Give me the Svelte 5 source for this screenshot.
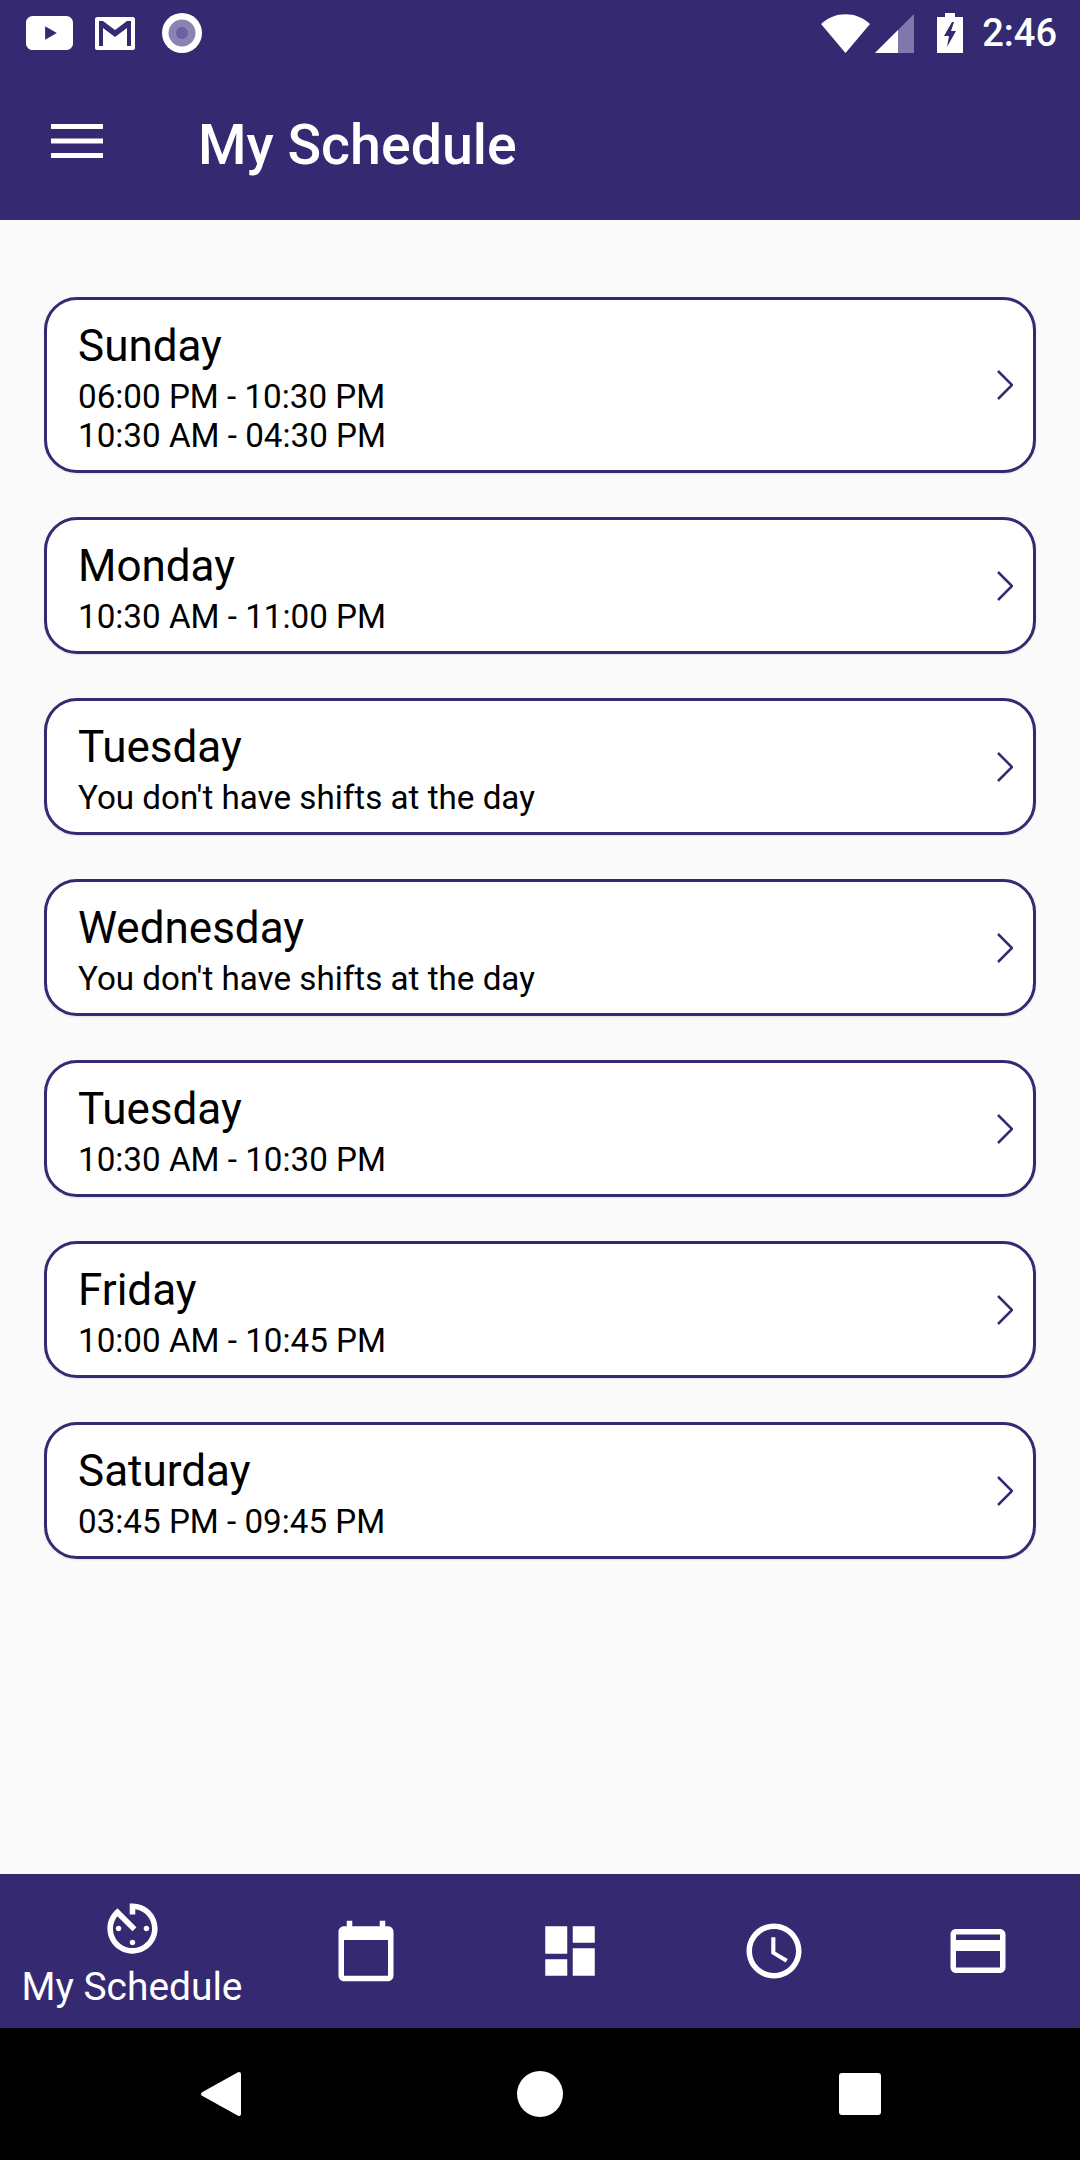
<script>
	const days = [
		{ name: "Sunday", lines: ["06:00 PM - 10:30 PM", "10:30 AM - 04:30 PM"] },
		{ name: "Monday", lines: ["10:30 AM - 11:00 PM"] },
		{ name: "Tuesday", lines: ["You don't have shifts at the day"] },
		{ name: "Wednesday", lines: ["You don't have shifts at the day"] },
		{ name: "Tuesday", lines: ["10:30 AM - 10:30 PM"] },
		{ name: "Friday", lines: ["10:00 AM - 10:45 PM"] },
		{ name: "Saturday", lines: ["03:45 PM - 09:45 PM"] }
	];

	const tabs = [
		"M20 3h-1V1h-2v2H7V1H5v2H4c-1.1 0-2 .9-2 2v16c0 1.1.9 2 2 2h16c1.1 0 2-.9 2-2V5c0-1.1-.9-2-2-2zm0 18H4V8h16v13z",
		"M3 13h8V3H3v10zm0 8h8v-6H3v6zm10 0h8V11h-8v10zm0-18v6h8V3h-8z",
		"M11.99 2C6.47 2 2 6.48 2 12s4.47 10 9.99 10C17.52 22 22 17.52 22 12S17.52 2 11.99 2zM12 20c-4.42 0-8-3.58-8-8s3.58-8 8-8 8 3.58 8 8-3.58 8-8 8zm.5-13H11v6l5.25 3.15.75-1.23-4.5-2.67z",
		"M20 4H4c-1.11 0-1.99.89-1.99 2L2 18c0 1.11.89 2 2 2h16c1.11 0 2-.89 2-2V6c0-1.11-.89-2-2-2zm0 14H4v-6h16v6zm0-10H4V6h16v2z"
	];
</script>

<div class="screen">
	<div class="status">
		<svg class="yt" width="47" height="34" viewBox="0 0 48 35" preserveAspectRatio="none">
			<path
				fill-rule="evenodd"
				d="M7 0h34c4 0 7 3 7 7v21c0 4-3 7-7 7H7c-4 0-7-3-7-7V7c0-4 3-7 7-7zM19.500 10.500v14l12-7z"
				fill="#fff"
			/>
		</svg>
		<svg class="gm" width="40" height="33" viewBox="0 0 40 33">
			<path
				fill-rule="evenodd"
				d="M2 0h36c1 0 2 1 2 2v29c0 1-1 2-2 2H2c-1 0-2-1-2-2V2c0-1 1-2 2-2zM4 4v25h4V11l12 9 12-9v18h4V4h-4L20 13 8 4z"
				fill="#fff"
			/>
		</svg>
		<svg class="dot" width="40" height="40" viewBox="0 0 40 40">
			<circle cx="20" cy="20" r="20" fill="#fff" />
			<circle cx="20" cy="20" r="13.500" fill="#8a83b4" />
			<circle cx="20" cy="20" r="6" fill="#6a62a0" />
		</svg>
		<span class="spacer"></span>
		<svg class="wifi" width="49" height="39" viewBox="0 0 49 39">
			<path d="M24.500 39L0 10C14 -3 35 -3 49 10z" fill="#fff" />
		</svg>
		<svg class="signal" width="39" height="39" viewBox="0 0 39 39">
			<path d="M0 39L39 0v39z" fill="#7f78ab" />
			<path d="M0 39l23-23v23z" fill="#fff" />
		</svg>
		<svg class="battery" width="26" height="40" viewBox="0 0 26 40">
			<path
				fill-rule="evenodd"
				d="M8 0h10v4h8v36H0V4h8zM15 9L7 23h5l-2 11 9-16h-5l3-9z"
				fill="#fff"
			/>
		</svg>
		<span class="clock">2:46</span>
	</div>

	<header>
		<svg width="52" height="34" viewBox="0 0 52 34">
			<rect y="0" width="52" height="5" fill="#fff" />
			<rect y="14.500" width="52" height="5" fill="#fff" />
			<rect y="29" width="52" height="5" fill="#fff" />
		</svg>
		<h1>My Schedule</h1>
	</header>

	<main>
		{#each days as day}
			<div class="card">
				<div class="info">
					<div class="day">{day.name}</div>
					<div class="lines">
						{#each day.lines as line}
							<div>{line}</div>
						{/each}
					</div>
				</div>
				<svg class="chevron" width="16" height="30" viewBox="0 0 16 30">
					<path d="M1 1l14 14L1 29" fill="none" stroke="#352a72" stroke-width="2.500" />
				</svg>
			</div>
		{/each}
	</main>

	<nav class="tabs">
		<div class="tab active">
			<svg width="67" height="67" viewBox="0 0 24 24">
				<path
					d="M11 17c0 .55.45 1 1 1s1-.45 1-1-.45-1-1-1-1 .45-1 1zm0-14v4h2V5.080c3.390.49 6 3.390 6 6.920 0 3.870-3.130 7-7 7s-7-3.130-7-7c0-1.680.59-3.220 1.580-4.420L12 13l1.410-1.410-6.800-6.800v.02C4.420 6.450 3 9.050 3 12c0 4.970 4.020 9 9 9 4.970 0 9-4.030 9-9s-4.030-9-9-9h-1zm7 9c0-.55-.45-1-1-1s-1 .45-1 1 .45 1 1 1 1-.45 1-1zM6 12c0 .55.45 1 1 1s1-.45 1-1-.45-1-1-1-1 .45-1 1z"
					fill="#fff"
				/>
			</svg>
			<span>My Schedule</span>
		</div>
		{#each tabs as d}
			<div class="tab">
				<svg width="66" height="66" viewBox="0 0 24 24"><path {d} fill="#fff" /></svg>
			</div>
		{/each}
	</nav>

	<div class="softkeys">
		<svg class="back" width="44" height="46" viewBox="0 0 44 46">
			<path d="M39 3L3 23l36 20z" fill="#fff" stroke="#fff" stroke-width="4" stroke-linejoin="round" />
		</svg>
		<svg class="home" width="46" height="46" viewBox="0 0 46 46"><circle cx="23" cy="23" r="23" fill="#fff" /></svg>
		<svg width="42" height="42" viewBox="0 0 42 42"><rect width="42" height="42" rx="3" fill="#fff" /></svg>
	</div>
</div>

<style>
	:global(body) {
		margin: 0;
	}
	.screen {
		width: 1080px;
		height: 2160px;
		display: flex;
		flex-direction: column;
		background: #fafafa;
		font-family: Roboto, "Liberation Sans", sans-serif;
	}
	.status {
		height: 72px;
		flex: none;
		display: flex;
		align-items: center;
		padding: 0 23px 6px 26px;
		background: #352a72;
		box-sizing: border-box;
	}
	.yt {
		margin-right: 22px;
	}
	.gm {
		margin-right: 27px;
	}
	.spacer {
		flex: 1;
	}
	.signal {
		margin-left: 5px;
	}
	.battery {
		margin-left: 23px;
	}
	.clock {
		margin-left: 19px;
		color: #fff;
		font-size: 38px;
		font-weight: 500;
	}
	header {
		height: 148px;
		flex: none;
		display: flex;
		align-items: center;
		gap: 95px;
		padding-left: 51px;
		background: #352a72;
		box-sizing: border-box;
	}
	header svg {
		margin-bottom: 10px;
	}
	h1 {
		margin: 0;
		color: #fff;
		font-size: 55.500px;
		font-weight: 500;
		line-height: 1;
	}
	main {
		flex: 1;
		display: flex;
		flex-direction: column;
		gap: 44px;
		padding: 77px 44px 0;
	}
	.card {
		display: flex;
		align-items: center;
		justify-content: space-between;
		padding: 21px 20px 15px 31px;
		background: #fff;
		border: 3px solid #352a72;
		border-radius: 33px;
		box-shadow: 0 1px 2px rgba(0, 0, 0, 0.1);
	}
	.chevron {
		margin-bottom: 6px;
	}
	.day {
		font-size: 44px;
		line-height: 50px;
		color: #000;
	}
	.lines {
		margin-top: 6px;
		font-size: 33.200px;
		line-height: 39px;
		color: #000;
	}
	.tabs {
		height: 154px;
		flex: none;
		display: flex;
		background: #352a72;
	}
	.tab {
		flex: 0 0 204px;
		display: flex;
		align-items: center;
		justify-content: center;
	}
	.tab.active {
		flex: 0 0 264px;
		flex-direction: column;
		justify-content: flex-start;
		padding-top: 21px;
		box-sizing: border-box;
		color: #fff;
		font-size: 38.900px;
		line-height: 44px;
	}
	.tab.active span {
		margin-top: 3px;
	}
	.softkeys {
		height: 132px;
		flex: none;
		display: grid;
		grid-template-columns: repeat(3, 320px);
		padding: 0 60px;
		align-items: center;
		justify-items: center;
		background: #000;
	}
	.back {
		margin-left: 3px;
	}
	.home {
		margin-bottom: 1px;
	}
</style>
